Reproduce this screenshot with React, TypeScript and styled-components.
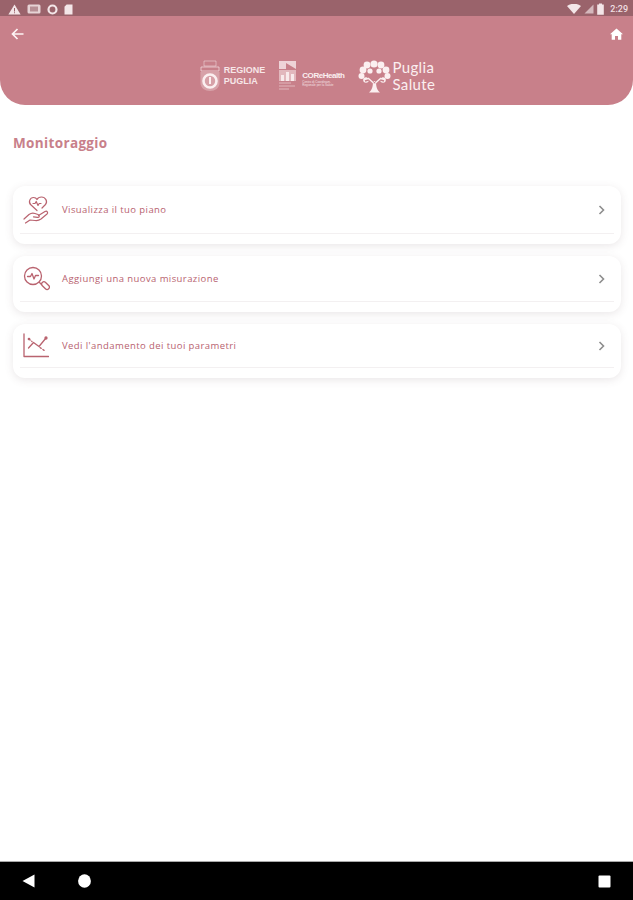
import React from "react";
import styled, { createGlobalStyle } from "styled-components";

const Global = createGlobalStyle`
  html, body { margin: 0; padding: 0; background: #fff; }
  body { font-family: "Open Sans", "Liberation Sans", sans-serif; }
`;

const Screen = styled.div`
  width: 633px;
  height: 900px;
  display: flex;
  flex-direction: column;
  overflow: hidden;
  background: #fff;
`;

const StatusBar = styled.div`
  height: 16px;
  flex: none;
  background: #9a636b;
  display: flex;
  align-items: center;
  justify-content: space-between;
  padding: 2px 5px 0 8px;
  box-sizing: border-box;
  color: #f3e6e8;
`;

const StatusGroup = styled.div`
  display: flex;
  align-items: center;
  gap: 6px;
`;

const StatusRight = styled(StatusGroup)`
  gap: 3px;
`;

const Clock = styled.span`
  font: 500 9px/1 Roboto, sans-serif;
  margin-left: 3px;
  color: #f0dfe2;
`;

const Header = styled.header`
  height: 89px;
  flex: none;
  background: #c8808a;
  border-radius: 0 0 25px 25px;
  display: flex;
  flex-direction: column;
  padding: 10px 10px 0 11px;
  box-sizing: border-box;
`;

const HeaderIcons = styled.div`
  display: flex;
  justify-content: space-between;
  align-items: center;
  height: 16px;
`;

const Logos = styled.div`
  display: flex;
  align-items: center;
  justify-content: center;
  margin-top: 16px;
  color: #fbeff0;
  height: 36px;
`;

const Region = styled.div`
  display: flex;
  align-items: center;
  gap: 3px;
  margin-right: 14px;
`;

const RegionText = styled.div`
  font: 700 9px/11px "Liberation Sans", sans-serif;
  letter-spacing: 0;
  opacity: 0.92;
`;

const Covid = styled.div`
  display: flex;
  align-items: center;
  gap: 5px;
  margin-right: 14px;
`;

const CovidText = styled.div`
  display: flex;
  flex-direction: column;
  padding-top: 6px;
  font: 700 8px/10px "Liberation Sans", sans-serif;
  letter-spacing: -0.45px;
`;

const CovidSmall = styled.span`
  font: 400 3px/3.5px "Liberation Sans", sans-serif;
  letter-spacing: 0;
  opacity: 0.85;
`;

const Salute = styled.div`
  display: flex;
  align-items: center;
  gap: 1px;
`;

const SaluteText = styled.div`
  font: 400 15px/17px Lato, sans-serif;
  letter-spacing: 0.35px;
`;

const Main = styled.main`
  flex: 1;
  padding: 0 12px 0 13px;
  display: flex;
  flex-direction: column;
`;

const Title = styled.h1`
  margin: 29px 0 33px;
  font: 700 13.5px/19px "Open Sans", sans-serif;
  letter-spacing: 0.35px;
  color: #c8808a;
`;

const List = styled.div`
  display: flex;
  flex-direction: column;
  gap: 12px;
`;

const Card = styled.div<{ $h: number }>`
  height: ${p => p.$h}px;
  background: #fff;
  border-radius: 12px;
  box-shadow: 0 2px 9px rgba(90, 70, 75, 0.13);
  box-sizing: border-box;
  padding: 0 7px 10px;
  display: flex;
  flex-direction: column;
`;

const Row = styled.div`
  flex: 1;
  display: flex;
  align-items: center;
  padding: 0 8px 0 0;
  border-bottom: 1px solid #f3f0f1;
`;

const IconSlot = styled.div`
  width: 32px;
  height: 30px;
  flex: none;
  margin-right: 10px;
  display: flex;
  align-items: center;
  justify-content: center;
  color: #b9636f;
`;

const Label = styled.span`
  flex: 1;
  font: 400 9.5px/12px "Open Sans", sans-serif;
  letter-spacing: 0.42px;
  color: #b8626f;
`;

const NavBar = styled.div`
  height: 39px;
  flex: none;
  background: #000;
  border-top: 1px solid #a9a9a9;
  display: flex;
  align-items: center;
  padding: 0 22px;
  box-sizing: border-box;
  color: #fff;
`;

const NavLeft = styled.div`
  display: flex;
  align-items: center;
  gap: 43px;
  flex: 1;
`;

const TriangleAlert = () => (
  <svg width="13" height="11" viewBox="0 0 13 11"><path d="M6.5 0.5 12.6 10.6H0.4Z" fill="currentColor" /><path d="M6 4h1v3.5H6zM6 8.2h1v1H6z" fill="#9a636b" /></svg>
);
const Photo = () => (
  <svg width="14" height="10" viewBox="0 0 14 10"><rect x="0.5" y="0.5" width="13" height="9" rx="1.5" fill="currentColor" opacity=".85" /><rect x="3" y="2.5" width="8" height="5" fill="#b78f95" /></svg>
);
const Ring = () => (
  <svg width="11" height="11" viewBox="0 0 11 11"><circle cx="5.5" cy="5.5" r="4" fill="none" stroke="currentColor" strokeWidth="2.2" /></svg>
);
const Sd = () => (
  <svg width="9" height="11" viewBox="0 0 9 11"><path d="M2.6 0.5H8.5V10.5H0.5V2.7Z" fill="currentColor" /></svg>
);
const Wifi = () => (
  <svg width="14" height="10" viewBox="0 0 14 10"><path d="M0 2C4-1 10-1 14 2L7 10Z" fill="currentColor" /></svg>
);
const Signal = () => (
  <svg width="10" height="10" viewBox="0 0 10 10"><path d="M9.5 0.5V9.5H0.5Z" fill="currentColor" opacity=".65" /></svg>
);
const Battery = () => (
  <svg width="7" height="12" viewBox="0 0 7 12"><path d="M2 0.5H5V1.5H6.8V11.8H0.2V1.5H2Z" fill="currentColor" /></svg>
);

const Back = () => (
  <svg width="13" height="12" viewBox="0 0 13 12" fill="none" stroke="#fdf3f4" strokeWidth="1.7"><path d="M6.5 1 1.5 6l5 5M1.5 6H12.5" /></svg>
);
const Home = () => (
  <svg width="13" height="12" viewBox="0 0 13 12"><path d="M6.5 0.5 13 6.3H11.3V11.7H8V8H5V11.7H1.7V6.3H0Z" fill="#fff" /></svg>
);

const Crest = () => (
  <svg width="22" height="32" viewBox="0 0 22 32" fill="none" stroke="currentColor">
    <path d="M5 1h12v5H5z" strokeWidth="1" opacity=".45" />
    <path d="M2 7h18v4H2z" strokeWidth="1" opacity=".6" />
    <path d="M1.5 12H20.5V23C20.5 28 16 31 11 31S1.5 28 1.5 23Z" fill="currentColor" stroke="none" opacity=".3" />
    <circle cx="11" cy="21" r="6.5" strokeWidth="2.6" />
    <path d="M11 17v7" strokeWidth="2" />
  </svg>
);

const CovidMark = () => (
  <svg width="18" height="32" viewBox="0 0 18 32">
    <path d="M0 1H17V9L7 3V9H0Z" fill="currentColor" opacity=".75" />
    <path d="M0 10H17V21H0Z" fill="currentColor" opacity=".5" />
    <path d="M2 15H5V21H2ZM7 12H10V21H7ZM12 14H15V21H12Z" fill="currentColor" opacity=".9" />
    <path d="M0 23H12M0 26H16M0 29H10" stroke="currentColor" strokeWidth="1" opacity=".5" />
  </svg>
);

const Tree = () => (
  <svg width="33" height="34" viewBox="0 0 33 34" fill="none" stroke="currentColor">
    <g fill="currentColor" stroke="none">
      <circle cx="16" cy="5" r="3.6" /><circle cx="9" cy="6" r="3.4" /><circle cx="23" cy="6" r="3.4" />
      <circle cx="5" cy="11" r="3.4" /><circle cx="28" cy="11" r="3.4" /><circle cx="3.5" cy="17" r="3" />
      <circle cx="29.5" cy="17" r="3" /><circle cx="8" cy="21" r="2.8" /><circle cx="25" cy="21" r="2.8" />
      <circle cx="12" cy="12" r="2.6" /><circle cx="21" cy="12" r="2.6" />
      <path d="M11 33.500C14 31 15 28 15 22H18C18 28 19 31 22 33.500Z" />
    </g>
    <path d="M16.5 22V9M16.500 24 9 17M16.500 24 24 17M12.500 20.500 7 22M20.500 20.500 26 22" strokeWidth="1.6" stroke="#c8808a" />
    <path d="M15.500 24 10 19M17.500 24 23 19" strokeWidth="1.4" />
  </svg>
);

const HeartHand = () => (
  <svg width="27" height="28" viewBox="0 0 27 28" fill="none" stroke="currentColor" strokeWidth="1.2" strokeLinecap="round" strokeLinejoin="round">
    <path d="M14 14.5 7.8 8.8C5 6 7 1.5 10.5 1.5 12 1.5 13.4 2.3 14 3.5 14.6 2.3 16.5 1 18.5 1 22.5 1 25 5.5 22.5 8.5L19 12" />
    <path d="M10 7.5H12L13.2 5.5 15 9.5 16.2 7.5H18" />
    <path d="M1 23 6 18.5C8 17 10 16.8 12 17.5L15 18.5C17 19.3 16.5 21.5 14.5 21.3L10.5 20.8" />
    <path d="M15.5 19.5 22 15.5C24 14.5 25.5 16.5 24 18L18 23C16 24.5 14 24.8 12 24.5L7 24 2.5 27" />
  </svg>
);

const SearchPulse = () => (
  <svg width="27" height="26" viewBox="0 0 27 26" fill="none" stroke="currentColor" strokeWidth="1.3" strokeLinecap="round" strokeLinejoin="round">
    <circle cx="10" cy="10" r="8.5" />
    <path d="M4.5 10.5H7.5L9 7.5 11 13 12.5 9.5H15.5" />
    <path d="M16.5 16.5 18.5 18.5" />
    <rect x="18" y="17.3" width="9" height="4.6" rx="2.3" transform="rotate(45 22.5 19.6)" />
  </svg>
);

const Chart = () => (
  <svg width="26" height="25" viewBox="0 0 26 25" fill="none" stroke="currentColor" strokeWidth="1.3" strokeLinecap="round" strokeLinejoin="round">
    <path d="M1 1V23.5H25.5" />
    <path d="M5.5 15 10.5 9.5 16 13.5 23 5" />
    <circle cx="6" cy="6" r=".7" /><path d="M6 6 9 8.5M17 14.5 22 18" strokeDasharray="1.5 2" />
    <circle cx="23" cy="5" r="1" fill="currentColor" />
  </svg>
);

const Chevron = () => (
  <svg width="8" height="10" viewBox="0 0 8 10" fill="none" stroke="#8d8d8d" strokeWidth="1.6"><path d="M1.5 1 5.5 5 1.5 9" /></svg>
);

const items = [
  { h: 58, label: "Visualizza il tuo piano", icon: <HeartHand /> },
  { h: 56, label: "Aggiungi una nuova misurazione", icon: <SearchPulse /> },
  { h: 54, label: "Vedi l'andamento dei tuoi parametri", icon: <Chart /> },
];

export default function App() {
  return (
    <Screen>
      <Global />
      <StatusBar>
        <StatusGroup><TriangleAlert /><Photo /><Ring /><Sd /></StatusGroup>
        <StatusRight><Wifi /><Signal /><Battery /><Clock>2:29</Clock></StatusRight>
      </StatusBar>
      <Header>
        <HeaderIcons><Back /><Home /></HeaderIcons>
        <Logos>
          <Region><Crest /><RegionText>REGIONE<br />PUGLIA</RegionText></Region>
          <Covid>
            <CovidMark />
            <CovidText>COReHealth<CovidSmall>Centro di Coordinam.</CovidSmall><CovidSmall>Regionale per la Salute</CovidSmall></CovidText>
          </Covid>
          <Salute><Tree /><SaluteText>Puglia<br />Salute</SaluteText></Salute>
        </Logos>
      </Header>
      <Main>
        <Title>Monitoraggio</Title>
        <List>
          {items.map(it => (
            <Card key={it.label} $h={it.h}>
              <Row>
                <IconSlot>{it.icon}</IconSlot>
                <Label>{it.label}</Label>
                <Chevron />
              </Row>
            </Card>
          ))}
        </List>
      </Main>
      <NavBar>
        <NavLeft>
          <svg width="13" height="14" viewBox="0 0 13 14"><path d="M12.5 0.5V13.5L0.5 7Z" fill="#fff" /></svg>
          <svg width="13" height="14" viewBox="0 0 13 14"><ellipse cx="6.5" cy="7" rx="6.4" ry="6.8" fill="#fff" /></svg>
        </NavLeft>
        <svg width="13" height="13" viewBox="0 0 13 13"><rect x="0.5" y="0.5" width="12" height="12" rx="1" fill="#fff" /></svg>
      </NavBar>
    </Screen>
  );
}
